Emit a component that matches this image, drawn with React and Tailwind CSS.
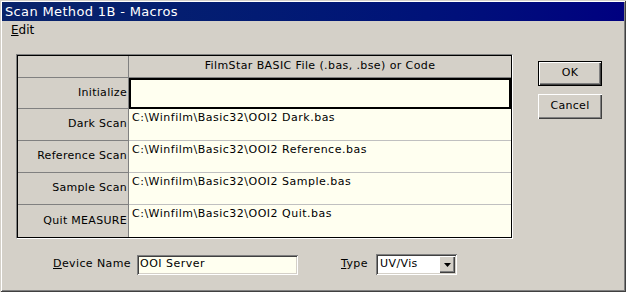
import React from "react";

const rows = [
  { label: "Initialize", value: "", selected: true },
  { label: "Dark Scan", value: "C:\\Winfilm\\Basic32\\OOI2 Dark.bas" },
  { label: "Reference Scan", value: "C:\\Winfilm\\Basic32\\OOI2 Reference.bas" },
  { label: "Sample Scan", value: "C:\\Winfilm\\Basic32\\OOI2 Sample.bas" },
  { label: "Quit MEASURE", value: "C:\\Winfilm\\Basic32\\OOI2 Quit.bas" },
];

export default function App() {
  return (
    <div
      className="w-[626px] h-[292px] bg-[#d4d0c8] p-[2px] flex flex-col text-[11px] text-black shadow-[inset_1px_1px_0_#d4d0c8,inset_-1px_-1px_0_#404040,inset_2px_2px_0_#ffffff,inset_-2px_-2px_0_#808080]"
      style={{ fontFamily: '"DejaVu Sans", Verdana, sans-serif' }}
    >
      <div className="h-[19px] bg-gradient-to-r from-[#0a246a] to-[#000080] text-white text-[13px] tracking-[0.35px] flex items-center pl-[3px] leading-none">
        Scan Method 1B - Macros
      </div>
      <div className="h-[18px] flex items-center pl-[9px] text-[12px]">
        <span>
          <span className="underline">E</span>dit
        </span>
      </div>
      <div className="flex mt-[15px]">
        <div className="ml-[14px] w-[497px] border-t border-l border-[#808080] border-r-white border-b-white border-r border-b">
          <div className="border border-black">
            <div className="flex h-[22px] border-b border-[#808080]">
              <div className="w-[111px] shrink-0 border-r border-[#808080]" />
              <div className="flex-1 flex items-center justify-center tracking-[0.4px]">
                FilmStar BASIC File (.bas, .bse) or Code
              </div>
            </div>
            {rows.map((r, i) => (
              <div key={r.label} className={`flex ${i === 0 ? "h-[31px]" : "h-[32px]"}`}>
                <div
                  className={`w-[111px] shrink-0 border-r border-[#808080] flex items-center justify-end pr-[1px] tracking-[0.3px] ${
                    i < rows.length - 1 ? "border-b" : ""
                  }`}
                >
                  {r.label}
                </div>
                {r.selected ? (
                  <div className="flex-1 bg-[#fffff0] border-2 border-black" />
                ) : (
                  <div
                    className={`flex-1 bg-[#fffff0] pl-[3px] pt-[1px] whitespace-nowrap tracking-[0.5px] ${
                      i < rows.length - 1 ? "border-b border-[#c0c0c0]" : ""
                    }`}
                  >
                    {r.value}
                  </div>
                )}
              </div>
            ))}
          </div>
        </div>
        <div className="ml-[25px] flex flex-col mt-[7px] gap-[8px]">
          <div className="w-[64px] h-[25px] border border-black">
            <div className="w-full h-full flex items-center justify-center tracking-[0.3px] shadow-[inset_1px_1px_0_#ffffff,inset_-1px_-1px_0_#404040,inset_-2px_-2px_0_#808080]">
              OK
            </div>
          </div>
          <div className="w-[64px] h-[25px] flex items-center justify-center tracking-[0.3px] shadow-[inset_1px_1px_0_#ffffff,inset_-1px_-1px_0_#404040,inset_-2px_-2px_0_#808080]">
            Cancel
          </div>
        </div>
      </div>
      <div className="flex items-center mt-[15px] h-[21px]">
        <div className="ml-[51px] w-[84px] tracking-[0.4px]">
          <span className="underline">D</span>evice Name
        </div>
        <div className="w-[161px] h-[20px] bg-[#fffff0] flex items-center pl-[3px] tracking-[0.5px] shadow-[inset_1px_1px_0_#808080,inset_-1px_-1px_0_#ffffff,inset_2px_2px_0_#404040,inset_-2px_-2px_0_#d4d0c8]">
          OOI Server
        </div>
        <div className="ml-[43px] w-[35px] tracking-[0.4px]">
          <span className="underline">T</span>ype
        </div>
        <div className="w-[81px] h-[21px] bg-white flex items-center shadow-[inset_1px_1px_0_#808080,inset_-1px_-1px_0_#ffffff,inset_2px_2px_0_#404040,inset_-2px_-2px_0_#d4d0c8] p-[2px]">
          <div className="flex-1 pl-[2px] tracking-[0.4px]">UV/Vis</div>
          <div className="w-[16px] h-[17px] bg-[#d4d0c8] flex items-center justify-center shadow-[inset_1px_1px_0_#ffffff,inset_-1px_-1px_0_#404040,inset_-2px_-2px_0_#808080]">
            <svg width="7" height="4" viewBox="0 0 7 4">
              <path d="M0 0h7L3.5 4z" fill="#000" />
            </svg>
          </div>
        </div>
      </div>
    </div>
  );
}
